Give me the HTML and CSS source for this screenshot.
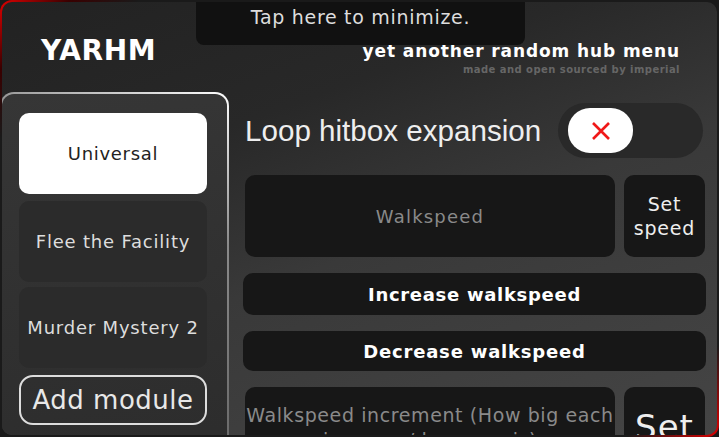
FILE: index.html
```html
<!DOCTYPE html>
<html lang="en">
<head>
    <meta charset="utf-8">
    <title>YARHM</title>
    <link rel="stylesheet" href="styles.css">
</head>
<body>
    <div class="window">
        <div class="minimize">Tap here to minimize.</div>

        <div class="header">
            <h1 class="logo">YARHM</h1>
            <div class="title">
                <div class="title-main">yet another random hub menu</div>
                <div class="title-sub">made and open sourced by imperial</div>
            </div>
        </div>

        <div class="main">
            <div class="sidebar">
                <div class="module active">Universal</div>
                <div class="module">Flee the Facility</div>
                <div class="module module-mm">Murder Mystery 2</div>
                <div class="add-btn">Add module</div>
            </div>

            <div class="content">
                <div class="toggle-row">
                    <span class="toggle-label">Loop hitbox expansion</span>
                    <div class="toggle">
                        <div class="knob">
                            <svg width="22" height="22" viewBox="0 0 22 22">
                                <path d="M3 3 L19 19 M19 3 L3 19" stroke="#f01818" stroke-width="2.6" fill="none"/>
                            </svg>
                        </div>
                    </div>
                </div>

                <div class="input-row">
                    <div class="input">Walkspeed</div>
                    <div class="set-btn">Set<br>speed</div>
                </div>

                <div class="wide-btn">Increase walkspeed</div>
                <div class="wide-btn wide-dec">Decrease walkspeed</div>

                <div class="input-row">
                    <div class="input input-long">Walkspeed increment (How big each increase/decrease is)</div>
                    <div class="set-btn set-big">Set</div>
                </div>
            </div>
        </div>
    </div>
</body>
</html>
```

FILE: styles.css
```css
html, body {
    margin: 0;
    padding: 0;
    background: #1a1a1a;
    overflow: hidden;
}
.window {
    position: relative;
    box-sizing: border-box;
    width: 719px;
    height: 437px;
    border: 2px solid transparent;
    border-radius: 12px;
    background:
        linear-gradient(160deg, #222222 0%, #282828 30%, #393939 55%, #454545 100%) padding-box,
        linear-gradient(135deg, #e00000 0%, #3a0000 6%, transparent 12%, transparent 92%, #e00000 100%) border-box;
    overflow: hidden;
    font-family: "DejaVu Sans", sans-serif;
    color: #fff;
}
.minimize {
    position: absolute;
    top: -2px;
    left: 194px;
    width: 329px;
    height: 45px;
    background: #111;
    border-radius: 0 0 8px 8px;
    color: #ddd;
    font-size: 19px;
    letter-spacing: 0.7px;
    text-align: center;
    line-height: 34px;
}
.header {
    display: flex;
    justify-content: space-between;
    align-items: flex-start;
    height: 90px;
    padding: 0 37px 0 39px;
}
.logo {
    margin: 32px 0 0 0;
    font-size: 28px;
    font-weight: bold;
    letter-spacing: 0.6px;
}
.title {
    margin-top: 39px;
    text-align: right;
}
.title-main {
    font-size: 17px;
    font-weight: bold;
    letter-spacing: 0.9px;
}
.title-sub {
    margin-top: 3px;
    font-size: 10px;
    font-weight: bold;
    color: #666;
    letter-spacing: 0.45px;
}
.main {
    display: flex;
}
.sidebar {
    box-sizing: border-box;
    width: 229px;
    height: 380px;
    margin-left: -2px;
    padding: 19px 20px 0 17px;
    border: 2px solid transparent;
    border-radius: 14px;
    background:
        linear-gradient(170deg, #363636, #2c2c2c) padding-box,
        linear-gradient(210deg, #ffffff 0%, #8a8a8a 30%, #505050 100%) border-box;
    display: flex;
    flex-direction: column;
    gap: 7px;
}
.module {
    flex: none;
    height: 81px;
    border-radius: 10px;
    background: #2b2b2b;
    color: #ddd;
    font-size: 18px;
    letter-spacing: 0.8px;
    display: flex;
    align-items: center;
    justify-content: center;
}
.module.active {
    background: #fff;
    color: #222;
    letter-spacing: 0.7px;
}
.module-mm {
    margin-top: -2px;
}
.add-btn {
    flex: none;
    box-sizing: border-box;
    height: 50px;
    border: 2px solid #ddd;
    border-radius: 14px;
    color: #e8e8e8;
    font-size: 26px;
    letter-spacing: 0.5px;
    display: flex;
    align-items: center;
    justify-content: center;
}
.content {
    flex: 1;
    padding: 11px 11px 0 14px;
    display: flex;
    flex-direction: column;
    gap: 16px;
}
.toggle-row {
    display: flex;
    align-items: center;
    justify-content: space-between;
    padding: 0 3px 0 2px;
    margin-bottom: 1px;
}
.toggle-label {
    font-family: "Liberation Sans", Arial, sans-serif;
    font-size: 29.6px;
    color: #eee;
}
.toggle {
    width: 145px;
    height: 55px;
    border-radius: 28px;
    background: #292929;
    padding: 5px 0 0 10px;
    box-sizing: border-box;
}
.knob {
    width: 65px;
    height: 45px;
    border-radius: 22px;
    background: #fff;
    display: flex;
    align-items: center;
    justify-content: center;
}
.input-row {
    flex: none;
    display: flex;
    gap: 9px;
    padding: 0 1px 0 2px;
    height: 82px;
}
.input {
    flex: 1;
    border-radius: 10px;
    background: #171717;
    color: #8a8a8a;
    font-size: 18px;
    letter-spacing: 1.2px;
    display: flex;
    align-items: center;
    justify-content: center;
    text-align: center;
}
.input-long {
    font-size: 19px;
    letter-spacing: 0.6px;
    align-items: flex-start;
    padding-top: 16px;
    line-height: 25px;
}
.set-btn {
    width: 81px;
    border-radius: 10px;
    background: #171717;
    color: #eee;
    font-size: 19px;
    letter-spacing: 0.8px;
    line-height: 24px;
    display: flex;
    align-items: center;
    justify-content: center;
    text-align: center;
}
.set-big {
    font-size: 34px;
    letter-spacing: 1px;
    align-items: flex-start;
    padding-top: 28px;
}
.wide-btn {
    flex: none;
    height: 42px;
    border-radius: 10px;
    background: #171717;
    font-size: 18px;
    font-weight: bold;
    letter-spacing: 0.7px;
    display: flex;
    align-items: center;
    justify-content: center;
}
.wide-dec {
    height: 40px;
    letter-spacing: 0.8px;
}
```
